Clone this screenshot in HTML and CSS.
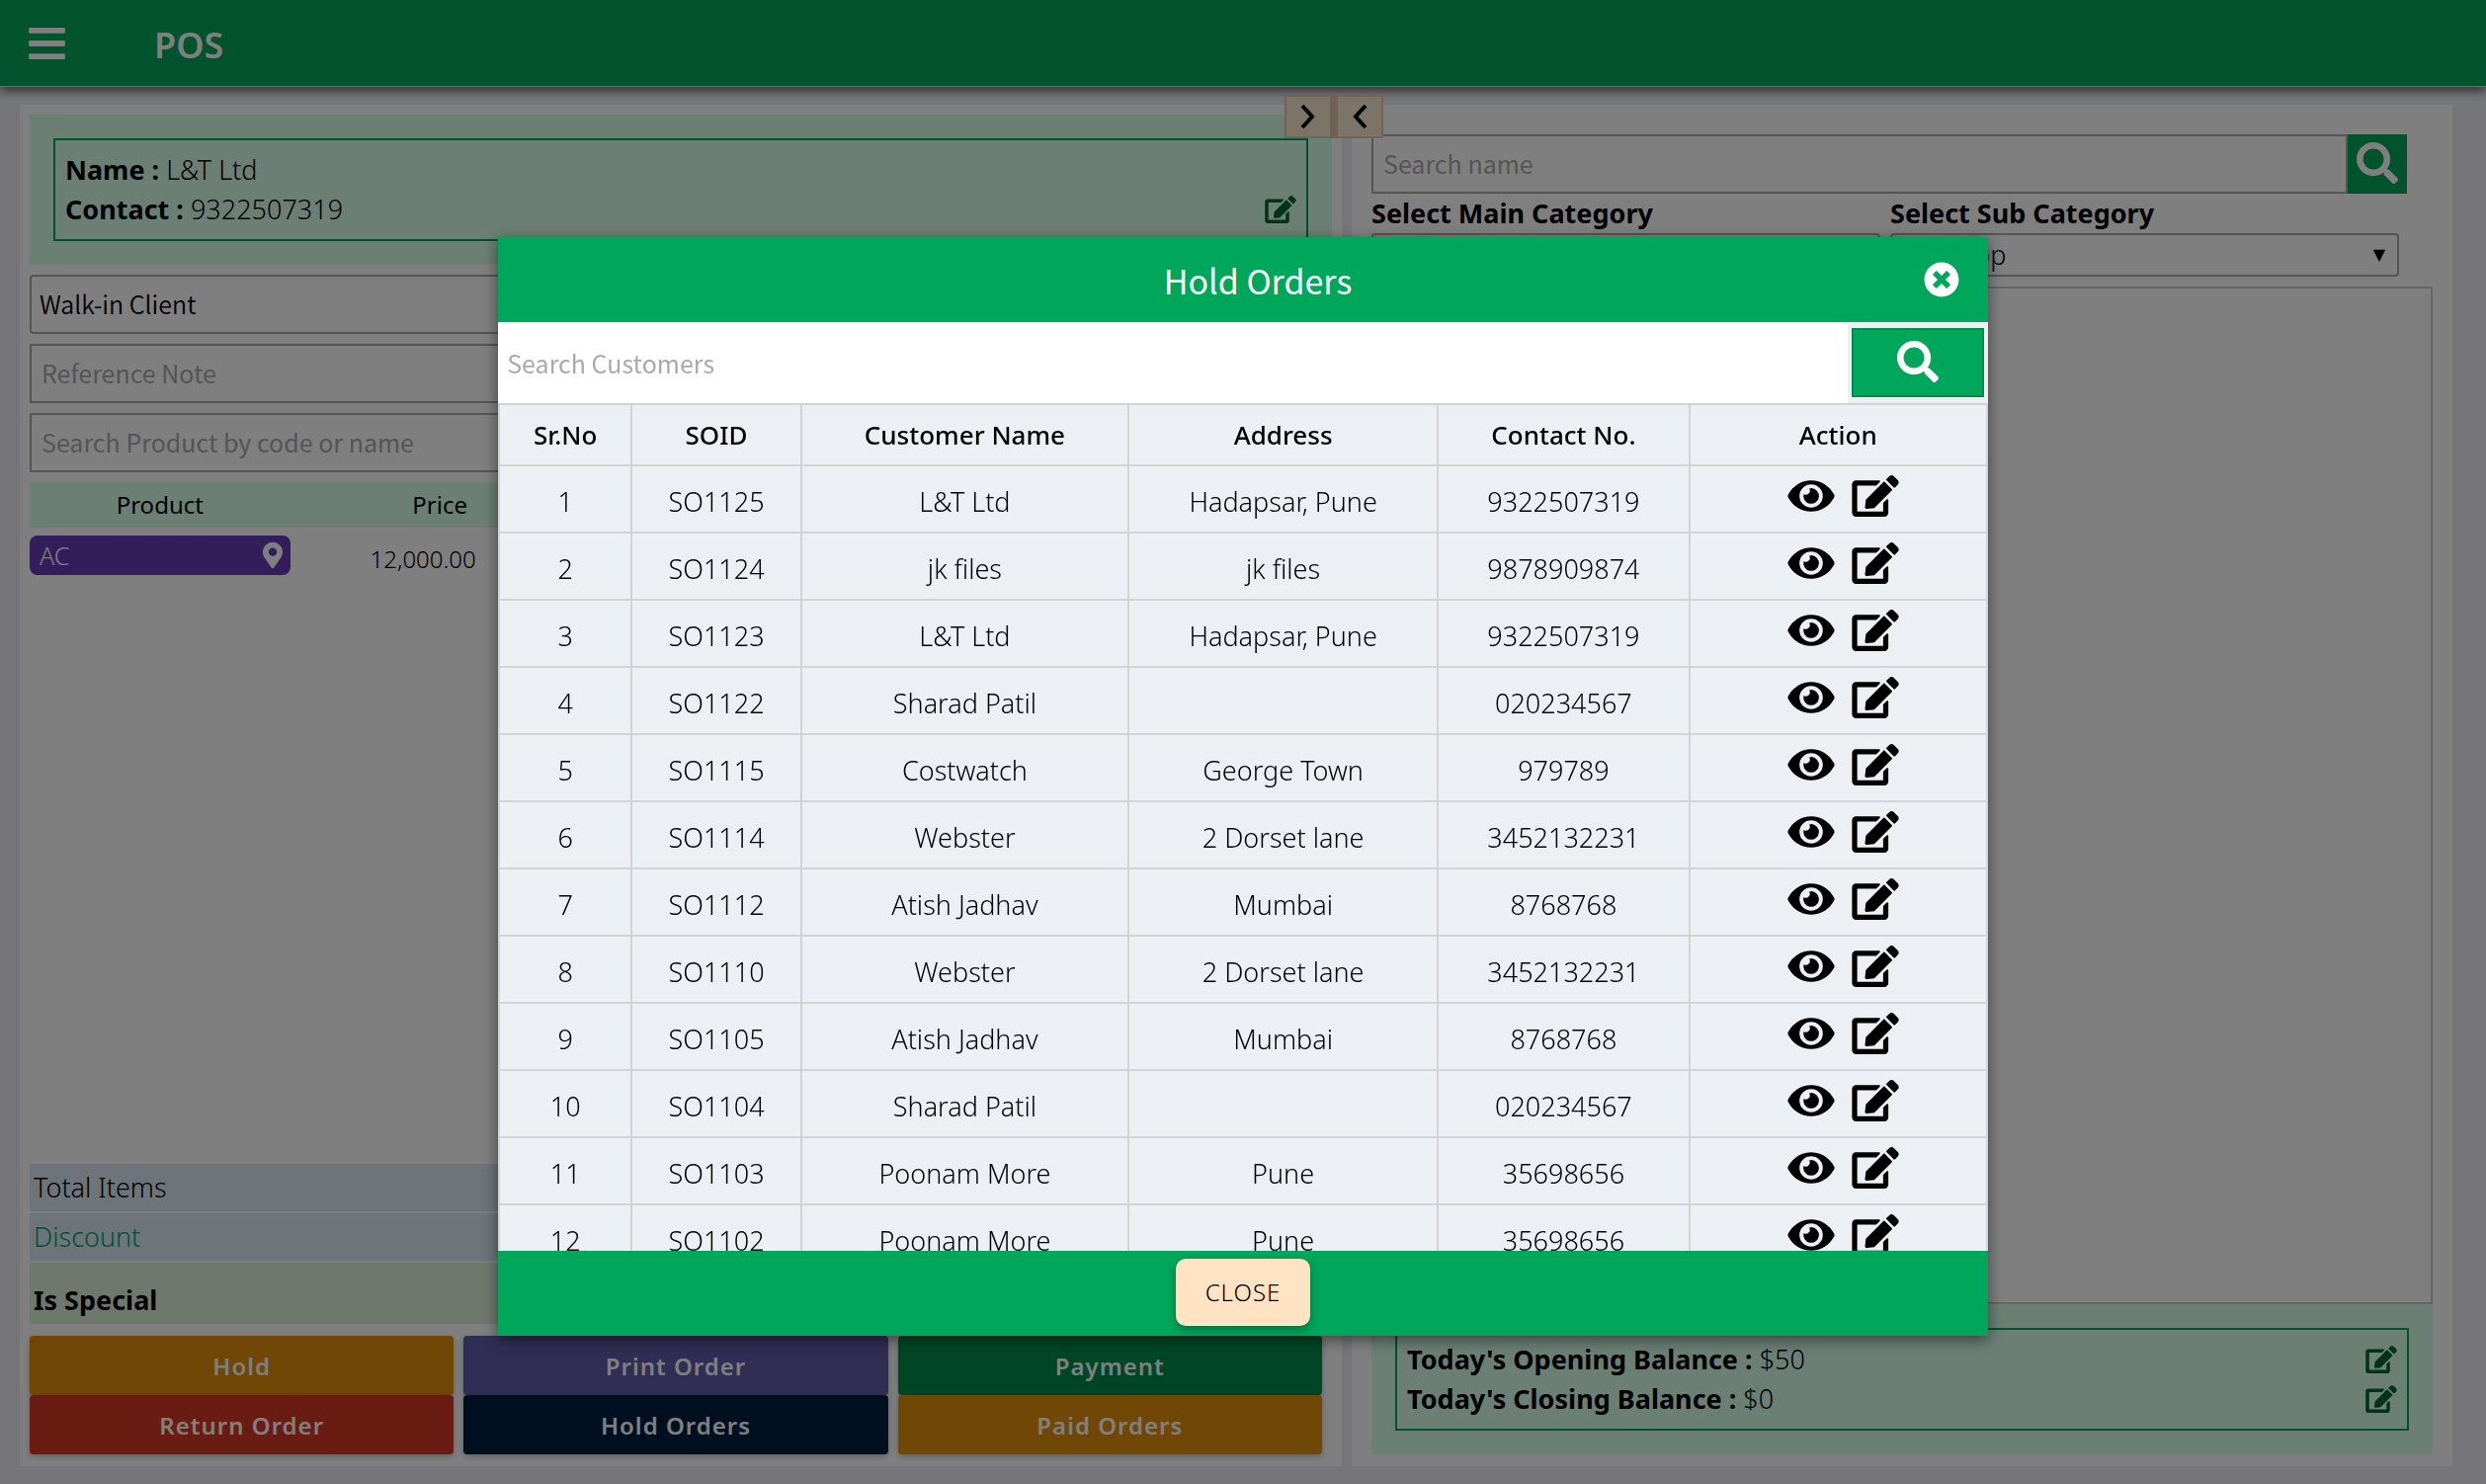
FILE: index.html
```html
<!DOCTYPE html>
<html lang="en">
<head>
<meta charset="utf-8">
<title>POS</title>
<link rel="stylesheet" href="styles.css">
</head>
<body>
<svg class="sprite" aria-hidden="true">
  <symbol id="i-bars" viewBox="0 0 448 512"><path d="M16 132h416c8.837 0 16-7.163 16-16V76c0-8.837-7.163-16-16-16H16C7.163 60 0 67.163 0 76v40c0 8.837 7.163 16 16 16zm0 160h416c8.837 0 16-7.163 16-16v-40c0-8.837-7.163-16-16-16H16c-8.837 0-16 7.163-16 16v40c0 8.837 7.163 16 16 16zm0 160h416c8.837 0 16-7.163 16-16v-40c0-8.837-7.163-16-16-16H16c-8.837 0-16 7.163-16 16v40c0 8.837 7.163 16 16 16z"/></symbol>
  <symbol id="i-eye" viewBox="0 0 576 512"><path d="M572.52 241.4C518.29 135.59 410.93 64 288 64S57.68 135.64 3.48 241.41a32.35 32.35 0 0 0 0 29.19C57.71 376.41 165.07 448 288 448s230.32-71.64 284.52-177.41a32.35 32.35 0 0 0 0-29.19zM288 400a144 144 0 1 1 144-144 143.93 143.93 0 0 1-144 144zm0-240a95.31 95.31 0 0 0-25.31 3.79 47.85 47.85 0 0 1-66.9 66.9A95.78 95.78 0 1 0 288 160z"/></symbol>
  <symbol id="i-edit" viewBox="0 0 576 512"><path d="M402.6 83.2l90.2 90.2c3.8 3.8 3.8 10 0 13.8L274.4 405.6l-92.8 10.3c-12.4 1.4-22.9-9.1-21.5-21.5l10.3-92.8L388.8 83.2c3.8-3.8 10-3.8 13.8 0zm162-22.9l-48.8-48.8c-15.2-15.2-39.9-15.2-55.2 0l-35.4 35.4c-3.8 3.8-3.8 10 0 13.8l90.2 90.2c3.8 3.8 10 3.8 13.8 0l35.4-35.4c15.2-15.3 15.2-40 0-55.2zM384 346.2V448H64V128h229.8c3.2 0 6.2-1.3 8.5-3.5l40-40c7.6-7.6 2.2-20.5-8.5-20.5H48C21.5 64 0 85.5 0 112v352c0 26.5 21.5 48 48 48h352c26.5 0 48-21.5 48-48V306.2c0-10.7-12.9-16-20.5-8.5l-40 40c-2.2 2.3-3.5 5.3-3.5 8.5z"/></symbol>
  <symbol id="i-search" viewBox="0 0 512 512"><path d="M505 442.7L405.3 343c-4.5-4.5-10.6-7-17-7H372c27.6-35.3 44-79.7 44-128C416 93.1 322.9 0 208 0S0 93.1 0 208s93.1 208 208 208c48.3 0 92.7-16.4 128-44v16.3c0 6.4 2.5 12.5 7 17l99.7 99.7c9.4 9.4 24.6 9.4 33.9 0l28.3-28.3c9.4-9.4 9.4-24.6.1-34zM208 336c-70.7 0-128-57.2-128-128 0-70.7 57.2-128 128-128 70.7 0 128 57.2 128 128 0 70.7-57.2 128-128 128z"/></symbol>
  <symbol id="i-times" viewBox="0 0 512 512"><path d="M256 8C119 8 8 119 8 256s111 248 248 248 248-111 248-248S393 8 256 8zm121.6 313.1c4.7 4.7 4.7 12.3 0 17L338 377.6c-4.7 4.7-12.3 4.7-17 0L256 312l-65.1 65.6c-4.7 4.7-12.3 4.7-17 0L134.4 338c-4.7-4.7-4.7-12.3 0-17l65.6-65-65.6-65.1c-4.7-4.7-4.7-12.3 0-17l39.6-39.6c4.7-4.7 12.3-4.7 17 0l65 65.7 65.1-65.6c4.7-4.7 12.3-4.7 17 0l39.6 39.6c4.7 4.7 4.7 12.3 0 17L312 256l65.6 65.1z"/></symbol>
  <symbol id="i-pin" viewBox="0 0 384 512"><path d="M172.268 501.67C26.97 291.031 0 269.413 0 192 0 85.961 85.961 0 192 0s192 85.961 192 192c0 77.413-26.97 99.031-172.268 309.67-9.535 13.774-29.93 13.773-39.464 0zM192 272c44.183 0 80-35.817 80-80s-35.817-80-80-80-80 35.817-80 80 35.817 80 80 80z"/></symbol>
  <symbol id="i-next" viewBox="0 0 16 26"><path d="M2 2l10 11L2 24" fill="none" stroke="currentColor" stroke-width="4"/></symbol>
  <symbol id="i-prev" viewBox="0 0 16 26"><path d="M14 2L4 13l10 11" fill="none" stroke="currentColor" stroke-width="4"/></symbol>
</svg>

<header class="topbar">
  <button class="icon-btn" type="button" aria-label="Menu"><svg class="icon-bars"><use href="#i-bars"/></svg></button>
  <h1 class="brand">POS</h1>
</header>

<main class="page">
  <section class="panel order">
    <div class="toggles">
      <button class="toggle" type="button" aria-label="Expand right"><svg class="icon-chevron"><use href="#i-next"/></svg></button>
      <button class="toggle" type="button" aria-label="Expand left"><svg class="icon-chevron"><use href="#i-prev"/></svg></button>
    </div>
    <div class="info">
      <div class="info-box">
        <p class="info-line"><span><b>Name :</b> L&amp;T Ltd</span></p>
        <p class="info-line"><span><b>Contact :</b> 9322507319</span>
          <button class="icon-btn" type="button" aria-label="Edit contact"><svg class="icon-edit"><use href="#i-edit"/></svg></button></p>
      </div>
    </div>
    <select class="field client" aria-label="Client"><option>Walk-in Client</option></select>
    <input class="field" type="text" placeholder="Reference Note" aria-label="Reference Note">
    <input class="field" type="text" placeholder="Search Product by code or name" aria-label="Search Product">
    <div class="cart-wrap">
      <table class="cart">
        <colgroup><col class="c-product"><col class="c-price"><col></colgroup>
        <thead><tr><th>Product</th><th>Price</th><th></th></tr></thead>
        <tbody><tr>
          <td><button class="product" type="button">AC <svg class="icon-pin"><use href="#i-pin"/></svg></button></td>
          <td class="price">12,000.00</td><td></td>
        </tr></tbody>
      </table>
    </div>
    <div class="totals">
      <div class="total">Total Items</div>
      <div class="total"><a href="#discount">Discount</a></div>
      <div class="total special">Is Special</div>
    </div>
    <div class="actions">
      <button class="action amber" type="button">Hold</button>
      <button class="action purple" type="button">Print Order</button>
      <button class="action green" type="button">Payment</button>
      <button class="action red" type="button">Return Order</button>
      <button class="action navy" type="button">Hold Orders</button>
      <button class="action amber" type="button">Paid Orders</button>
    </div>
  </section>

  <section class="panel catalog">
    <div class="finder">
      <input class="field" type="text" placeholder="Search name" aria-label="Search name">
      <button class="finder-btn" type="button" aria-label="Search"><svg class="icon-search"><use href="#i-search"/></svg></button>
    </div>
    <div class="filters">
      <div class="filter">
        <label for="main-cat">Select Main Category</label>
        <div class="select"><select id="main-cat"><option></option></select><span class="arrow" aria-hidden="true">▼</span></div>
      </div>
      <div class="filter">
        <label for="sub-cat">Select Sub Category</label>
        <div class="select"><select id="sub-cat"><option>Desktop</option></select><span class="arrow" aria-hidden="true">▼</span></div>
      </div>
    </div>
    <div class="items"></div>
    <div class="info">
      <div class="info-box">
        <p class="info-line"><span><b>Today's Opening Balance :</b> $50</span>
          <button class="icon-btn" type="button" aria-label="Edit opening balance"><svg class="icon-edit"><use href="#i-edit"/></svg></button></p>
        <p class="info-line"><span><b>Today's Closing Balance :</b> $0</span>
          <button class="icon-btn" type="button" aria-label="Edit closing balance"><svg class="icon-edit"><use href="#i-edit"/></svg></button></p>
      </div>
    </div>
  </section>
</main>

<div class="overlay">
  <div class="modal" role="dialog" aria-label="Hold Orders">
    <header class="modal-head">
      <h2>Hold Orders</h2>
      <button class="icon-btn" type="button" aria-label="Dismiss"><svg class="icon-times"><use href="#i-times"/></svg></button>
    </header>
    <div class="modal-search">
      <input type="text" placeholder="Search Customers" aria-label="Search Customers">
      <button type="button" aria-label="Search"><svg class="icon-search"><use href="#i-search"/></svg></button>
    </div>
    <div class="modal-body">
      <table class="orders">
        <colgroup><col class="w-sr"><col class="w-id"><col class="w-name"><col class="w-addr"><col class="w-tel"><col></colgroup>
        <thead><tr><th>Sr.No</th><th>SOID</th><th>Customer Name</th><th>Address</th><th>Contact No.</th><th>Action</th></tr></thead>
        <tbody id="rows"></tbody>
      </table>
    </div>
    <footer class="modal-foot"><button class="close" type="button">CLOSE</button></footer>
  </div>
</div>
<script src="orders.js"></script>
</body>
</html>
```
FILE: orders.js
```js
const orders = [
  ["SO1125", "L&T Ltd", "Hadapsar, Pune", "9322507319"],
  ["SO1124", "jk files", "jk files", "9878909874"],
  ["SO1123", "L&T Ltd", "Hadapsar, Pune", "9322507319"],
  ["SO1122", "Sharad Patil", "", "020234567"],
  ["SO1115", "Costwatch", "George Town", "979789"],
  ["SO1114", "Webster", "2 Dorset lane", "3452132231"],
  ["SO1112", "Atish Jadhav", "Mumbai", "8768768"],
  ["SO1110", "Webster", "2 Dorset lane", "3452132231"],
  ["SO1105", "Atish Jadhav", "Mumbai", "8768768"],
  ["SO1104", "Sharad Patil", "", "020234567"],
  ["SO1103", "Poonam More", "Pune", "35698656"],
  ["SO1102", "Poonam More", "Pune", "35698656"]
];

const rows = document.getElementById("rows");
orders.forEach((order, index) => {
  const tr = rows.insertRow();
  [index + 1, ...order].forEach(value => { tr.insertCell().textContent = value; });
  tr.insertCell().innerHTML = `<div class="row-actions">
    <button class="icon-btn" type="button" aria-label="View ${order[0]}"><svg class="icon-row"><use href="#i-eye"/></svg></button>
    <button class="icon-btn" type="button" aria-label="Edit ${order[0]}"><svg class="icon-row"><use href="#i-edit"/></svg></button>
  </div>`;
});
```
FILE: styles.css
```css
:root {
  --green: #00a65a;
  --green-dark: #008d4c;
  --mint: #d6ffea;
  --page: #ecf0f5;
  --line: #aaa;
  --ui: "Noto Sans", sans-serif;
  --alt: "Noto Sans CJK SC", "Noto Sans", sans-serif;
}

* { box-sizing: border-box; }

body {
  margin: 0;
  height: 100vh;
  display: flex;
  flex-direction: column;
  overflow: hidden;
  background: #ecedf5;
  color: #000;
  font: 300 27px/40px var(--ui);
}

button, input, select { font: inherit; color: inherit; margin: 0; border-radius: 0; }
button { cursor: pointer; }
h1, h2, p { margin: 0; }
svg { display: block; fill: currentColor; }
.sprite { display: none; }
::placeholder { color: var(--line); opacity: 1; }
b, label { font-weight: 700; }

.icon-btn { display: block; padding: 0; border: 0; background: none; }
.icon-bars { width: 37px; height: 42px; }
.icon-edit { width: 32px; height: 28px; color: #063; }
.icon-search { width: 42px; height: 42px; }
.icon-times { width: 36px; height: 36px; }
.icon-pin { width: 20px; height: 28px; }
.icon-chevron { width: 16px; height: 26px; }
.icon-row { width: 48px; height: 42px; }

.topbar {
  flex: none;
  height: 88px;
  display: flex;
  align-items: center;
  gap: 90px;
  padding: 0 29px;
  background: var(--green);
  border-bottom: 1px solid #ddd;
  color: #fff;
  box-shadow: 0 4px 10px rgba(0, 0, 0, .6);
  z-index: 1;
}
.brand { padding-top: 4px; font: 600 36px/48px var(--ui); }

.page {
  flex: 1;
  min-height: 0;
  display: grid;
  grid-template-columns: 1338fr 1114fr;
  gap: 10px;
  padding: 18px 34px 18px 20px;
}
.panel { display: flex; flex-direction: column; background: #fff; min-width: 0; min-height: 0; }
.order { position: relative; padding: 10px 10px 12px; gap: 10px; }
.catalog { padding: 30px 20px 12px; }

.toggles { position: absolute; top: -10px; right: -42px; z-index: 1; display: flex; }
.toggle {
  width: 50px;
  height: 44px;
  display: grid;
  place-items: center;
  padding: 0;
  border: 2px solid #e4cab0;
  border-right: 4px solid #dcc4ab;
  background: #fbe8d0;
}
.toggle:last-child { border-right: 2px solid #e4cab0; border-left: 4px solid #dcc4ab; }

.info { flex: none; padding: 24px; background: var(--mint); }
.info-box { height: 104px; padding: 10px; border: 2px solid var(--green); }
.info-line { display: flex; justify-content: space-between; align-items: center; }

.field {
  flex: none;
  width: 100%;
  height: 60px;
  padding: 0 10px 2px;
  border: 2px solid var(--line);
  background: #fff;
  font-family: var(--alt);
  font-size: 25px;
  font-weight: 400;
}
.client { appearance: none; padding-left: 8px; border-radius: 4px; font-weight: 350; }

.cart-wrap { flex: 1; min-height: 0; overflow: hidden; }
.cart { width: 100%; border-collapse: collapse; table-layout: fixed; }
.cart th { height: 46px; padding: 0; background: var(--mint); font-size: 24px; font-weight: 400; }
.cart td { padding: 8px 0 0; text-align: center; vertical-align: top; }
.cart .price { padding: 12px 34px 0 0; font-size: 24px; }
.c-product { width: 20%; }
.c-price { width: 23%; }
.product {
  width: 100%;
  height: 40px;
  display: flex;
  align-items: center;
  justify-content: space-between;
  padding: 0 8px 0 10px;
  border: 0;
  border-radius: 8px;
  background: #673ab7;
  color: #fff;
  font-size: 25px;
}

.totals { display: flex; flex-direction: column; gap: 2px; }
.total { height: 48px; padding: 4px; background: #daeaf6; }
.total a { color: var(--green); text-decoration: none; }
.special { height: 62px; padding-top: 18px; background: #dff0d8; font-weight: 700; }

.actions { display: grid; grid-template-columns: repeat(3, 1fr); column-gap: 10px; padding: 2px 10px 0 0; }
.action {
  height: 60px;
  padding: 2px 0 0;
  border: 0;
  border-radius: 4px;
  color: #fff;
  font-size: 24px;
  font-weight: 600;
  letter-spacing: 1px;
  box-shadow: 0 2px 6px rgba(0, 0, 0, .25);
}
.amber { background: #e08e0b; }
.purple { background: #605ca8; }
.green { background: var(--green-dark); }
.red { background: #d73925; }
.navy { background: #001f3f; }

.finder { display: flex; padding-right: 26px; }
.finder .field { flex: 1; }
.finder-btn {
  width: 60px;
  display: grid;
  place-items: center;
  padding: 0 0 2px;
  border: 0;
  background: var(--green);
  color: #fff;
}
.filters { display: grid; grid-template-columns: 1fr 1fr; gap: 10px; padding: 0 34px 10px 0; }
.filter { display: grid; }
.select { display: grid; align-items: center; }
.select select, .arrow { grid-area: 1 / 1; }
.select select {
  appearance: none;
  width: 100%;
  height: 44px;
  padding: 0 14px;
  border: 2px solid var(--line);
  border-radius: 4px;
  background: #fff;
}
.arrow { justify-self: end; padding-right: 14px; font: 16px/20px "DejaVu Sans", sans-serif; pointer-events: none; }
.items { flex: 1; border: 2px solid #ccc; }

.overlay { position: fixed; inset: 0; z-index: 2; background: rgba(0, 0, 0, .5); padding-top: 240px; }
.modal {
  width: calc(60% - 2px);
  height: calc(74vh + 1px);
  margin: 0 auto;
  display: flex;
  flex-direction: column;
  background: var(--page);
  box-shadow: 0 4px 14px rgba(0, 0, 0, .5);
}
.modal-head {
  flex: none;
  height: 86px;
  display: grid;
  grid-template-columns: 1fr auto 1fr;
  align-items: center;
  padding: 0 29px 0 59px;
  background: var(--green);
  color: #fff;
}
.modal-head h2 { grid-column: 2; padding-top: 2px; font: 400 34px/48px var(--alt); }
.modal-head .icon-btn { justify-self: end; }
.modal-search { flex: none; height: 82px; display: flex; padding: 2px 4px 0 0; gap: 4px; }
.modal-search input { flex: 1; padding: 0 9px 2px; border: 0; background: #fff; font: 400 25px/40px var(--alt); }
.modal-search button {
  width: 134px;
  height: 70px;
  margin-top: 4px;
  display: grid;
  place-items: center;
  padding: 0 0 2px;
  border: 2px solid var(--green-dark);
  background: var(--green);
  color: #fff;
}
.modal-body { flex: 1; min-height: 0; overflow: hidden; }
.orders { width: 100%; border-collapse: collapse; table-layout: fixed; }
.orders th, .orders td { padding: 0; border: 2px solid #d3d3d3; text-align: center; }
.orders th { height: 62px; font-size: 26px; font-weight: 500; }
.orders td { height: 68px; padding-top: 6px; }
.orders td:last-child { padding: 0 0 6px 10px; }
.w-sr { width: 8.9%; }
.w-id { width: 11.4%; }
.w-name { width: 22%; }
.w-addr { width: 20.8%; }
.w-tel { width: 16.9%; }
.row-actions { display: flex; justify-content: center; gap: 17px; }

.modal-foot {
  flex: none;
  height: 86px;
  display: flex;
  align-items: center;
  justify-content: center;
  padding-bottom: 2px;
  background: var(--green);
}
.close {
  height: 68px;
  padding: 0 30px;
  border: 0;
  border-radius: 10px;
  background: #ffe4c4;
  font-size: 24px;
  letter-spacing: 1px;
  box-shadow: 0 4px 8px rgba(0, 0, 0, .3);
}
```
